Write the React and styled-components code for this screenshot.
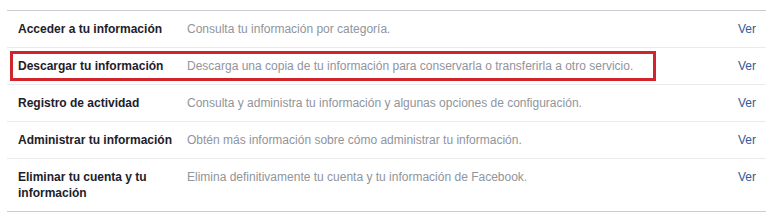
import React from "react";
import styled, { createGlobalStyle } from "styled-components";

const Global = createGlobalStyle`
  html, body { margin: 0; padding: 0; background: #fff; }
  body { font-family: "Liberation Sans", Arial, Helvetica, sans-serif; }
`;

const Page = styled.div`
  padding: 10px 7px 0 7px;
  width: 759px;
`;

const List = styled.div`
  border-top: 1px solid #c9ccd1;
  border-bottom: 1px solid #c9ccd1;
`;

const Row = styled.div`
  position: relative;
  display: grid;
  grid-template-columns: 169px 1fr auto;
  align-items: start;
  padding: 10px 10px 10px 11px;
  font-size: 12px;
  line-height: 16px;
  & + & {
    border-top: 1px solid #e9ebee;
  }
`;

const Title = styled.div`
  font-weight: bold;
  color: #1d2129;
  width: 160px;
`;

const Desc = styled.div`
  color: #90949c;
`;

const Link = styled.a`
  color: #365899;
  text-decoration: none;
  cursor: pointer;
`;

const Highlight = styled.div`
  position: absolute;
  left: 3px;
  top: 3px;
  width: 646px;
  height: 30px;
  box-sizing: border-box;
  border: 3px solid #d1242c;
  pointer-events: none;
`;

const items = [
  ["Acceder a tu información", "Consulta tu información por categoría."],
  ["Descargar tu información", "Descarga una copia de tu información para conservarla o transferirla a otro servicio.", true],
  ["Registro de actividad", "Consulta y administra tu información y algunas opciones de configuración."],
  ["Administrar tu información", "Obtén más información sobre cómo administrar tu información."],
  ["Eliminar tu cuenta y tu información", "Elimina definitivamente tu cuenta y tu información de Facebook."],
];

export default function App() {
  return (
    <>
      <Global />
      <Page>
        <List>
          {items.map(([t, d, hl]) => (
            <Row key={t}>
              <Title>{t}</Title>
              <Desc>{d}</Desc>
              <Link>Ver</Link>
              {hl && <Highlight />}
            </Row>
          ))}
        </List>
      </Page>
    </>
  );
}
